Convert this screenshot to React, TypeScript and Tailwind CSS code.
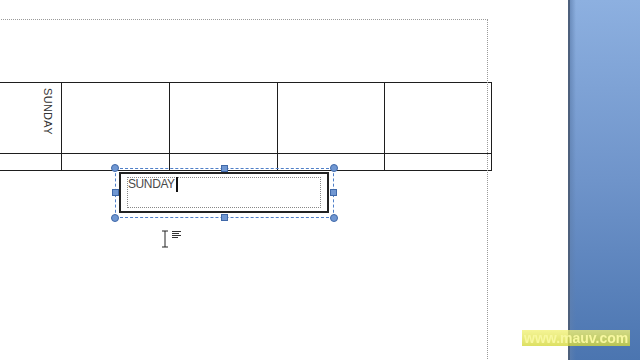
const cols = [108, 108, 108, 107, 107];

function Handle({ kind, className }: { kind: "dot" | "square"; className: string }) {
  return (
    <span
      className={
        "absolute border border-[#3f68a8] bg-[#7097d2] " +
        (kind === "dot" ? "h-[8px] w-[8px] rounded-full " : "h-[7px] w-[7px] ") +
        className
      }
    />
  );
}

function TextBox() {
  return (
    <div className="relative ml-[115px] mt-[-3px] h-[50px] w-[219px] border border-dashed border-[#4f7fc8]">
      <Handle kind="dot" className="left-[-5px] top-[-5px]" />
      <Handle kind="dot" className="right-[-5px] top-[-5px]" />
      <Handle kind="dot" className="bottom-[-5px] left-[-5px]" />
      <Handle kind="dot" className="bottom-[-5px] right-[-5px]" />
      <Handle kind="square" className="left-[105px] top-[-4px]" />
      <Handle kind="square" className="bottom-[-4px] left-[105px]" />
      <Handle kind="square" className="left-[-4px] top-[20px]" />
      <Handle kind="square" className="right-[-4px] top-[20px]" />
      <div className="ml-[3px] mt-[3px] h-[41px] w-[210px] border-2 border-[#222] px-[6px] pt-[3px]">
        <div className="flex h-[31px] w-[194px] items-start border border-dotted border-[#888]">
          <span className="mt-[-1px] text-[12px] leading-[14px] tracking-[-0.4px] text-[#4a4a4a] [font-family:'Liberation_Sans',Arial,sans-serif]">
            SUNDAY
          </span>
          <span className="ml-[1px] mt-[-1px] h-[15px] w-[2px] bg-[#111]" />
        </div>
      </div>
    </div>
  );
}

function Cursor() {
  return (
    <div className="ml-[161px] mt-[12px] flex items-start gap-[3px]">
      <svg width="8" height="18" viewBox="0 0 8 18">
        <path d="M1 1h6M4 1v16M1 17h6" stroke="#222" strokeWidth="1" fill="none" />
      </svg>
      <svg width="10" height="9" viewBox="0 0 10 9" className="mt-[1px]">
        <path d="M0 0.5h9M0 2.5h7M0 4.5h9M0 6.5h6" stroke="#333" strokeWidth="1" />
      </svg>
    </div>
  );
}

export default function App() {
  return (
    <div className="relative flex h-[360px] w-[640px] overflow-hidden bg-white">
      <div className="relative w-[568px] overflow-hidden">
        {/* margin guide */}
        <div className="pointer-events-none absolute left-[-2px] top-[19px] h-[400px] w-[490px] border-r border-t border-dotted border-[#9a9a9a]" />
        <div className="pt-[82px]">
          <table className="ml-[-47px] border-collapse">
            <tbody>
              <tr className="h-[71px]">
                {cols.map((w, i) => (
                  <td
                    key={i}
                    style={{ width: w }}
                    className="border border-[#1e1e1e] p-0 align-top"
                  >
                    {i === 0 && (
                      <div className="flex justify-end pr-[8px] pt-[5px]">
                        <span className="text-[11px] leading-[11px] tracking-[0.3px] text-[#333] [writing-mode:vertical-rl] [font-family:'Liberation_Sans',Arial,sans-serif]">
                          SUNDAY
                        </span>
                      </div>
                    )}
                  </td>
                ))}
              </tr>
              <tr className="h-[17px]">
                {cols.map((w, i) => (
                  <td key={i} style={{ width: w }} className="border border-[#1e1e1e] p-0" />
                ))}
              </tr>
            </tbody>
          </table>
          <TextBox />
          <Cursor />
        </div>
      </div>
      <div className="flex w-[72px] bg-gradient-to-b from-[#8db0e0] via-[#6f94ca] to-[#4b75b0]">
        <div className="w-[2px] bg-[#4d607c]" />
        <div className="w-[6px] bg-gradient-to-r from-[#5e7fae]/70 to-transparent" />
      </div>
      <div className="pointer-events-none absolute left-[522px] top-[330px] bg-gradient-to-b from-[#f2f27a]/80 to-[#d4d83a]/80 px-[2px] text-[14px] font-bold leading-[16px] text-[#f8f8a0] [font-family:'Liberation_Sans',Arial,sans-serif] blur-[0.6px]">
        www.mauv.com
      </div>
    </div>
  );
}
